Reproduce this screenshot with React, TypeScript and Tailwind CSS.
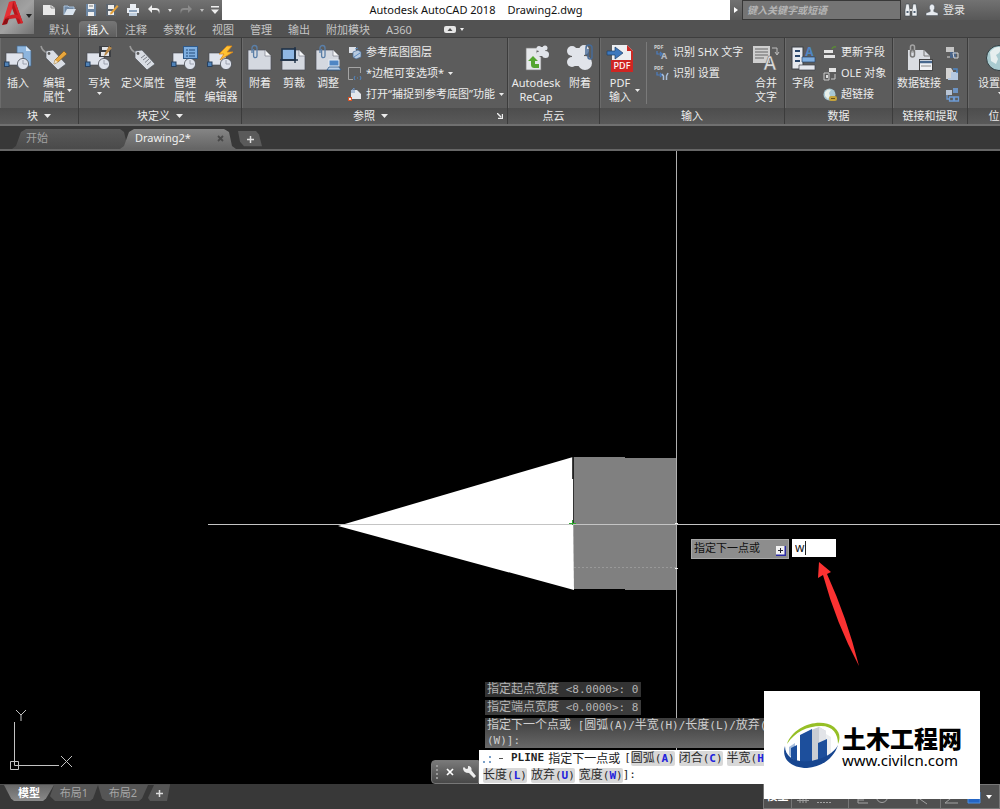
import type { ReactNode } from 'react';

type IconProps = { children: ReactNode };

function BigIcon({ children }: IconProps) {
  return (
    <svg className="h-7 w-7 shrink-0" viewBox="0 0 28 28" fill="none" aria-hidden="true">
      {children}
    </svg>
  );
}

function SmallIcon({ children }: IconProps) {
  return (
    <svg className="h-3.5 w-3.5 shrink-0 overflow-visible" viewBox="0 0 14 14" fill="none" aria-hidden="true">
      {children}
    </svg>
  );
}

function Caret({ className = 'h-[3px] w-[5px]' }: { className?: string }) {
  return (
    <svg className={`${className} shrink-0`} viewBox="0 0 6 4" preserveAspectRatio="none" aria-hidden="true">
      <path d="M0 0h6L3 4z" fill="currentColor" />
    </svg>
  );
}

// rectangle + circle + grip square, shared by all block icons
function BlockShapes() {
  return (
    <>
      <rect x="2" y="9" width="17" height="12" fill="#dfe3ec" stroke="#43474f" strokeWidth=".6" />
      <rect x="0.5" y="18" width="4.500" height="4.500" fill="#4f82b8" stroke="#27405e" />
      <circle cx="19" cy="20" r="5.6" fill="#dde2ec" stroke="#4a4e56" strokeWidth=".8" />
      <path d="M19 16v4h4" stroke="#8f96a3" strokeWidth=".8" />
    </>
  );
}

function TagShape() {
  return (
    <>
      <path d="M1 2c1 4 3 6 7 7" stroke="#9b9b9b" strokeWidth="1.6" />
      <path d="M6 7l7-1 13 14-8 6L6 14z" fill="#d9dde4" stroke="#50545b" strokeWidth=".7" />
      <circle cx="9" cy="9.500" r="1.4" fill="#5b5b5b" />
    </>
  );
}

function PageShape() {
  return (
    <>
      <path d="M2 6h17l6 6v14H2z" fill="#d4d8e0" stroke="#4b4f56" strokeWidth=".7" />
      <path d="M19 6v6h6" fill="#f6f7f9" stroke="#7b808a" strokeWidth=".7" />
    </>
  );
}

function ClipShape() {
  return <path d="M6 9V4a2.500 2.500 0 0 1 5 0v8a1.700 1.700 0 0 1-3.400 0V5" stroke="#5a7fa8" strokeWidth="1.300" />;
}

// four-lobed scan cloud
function Cloud() {
  return (
    <g fill="#e1e4ea">
      <circle cx="6" cy="7" r="5" />
      <circle cx="18" cy="6" r="5" />
      <circle cx="6" cy="18" r="5" />
      <circle cx="19" cy="19" r="7" />
      <path d="M6 4h12v18H6z" />
    </g>
  );
}

const icons = {
  insert: (
    <BigIcon>
      <path d="M13 2h9l5 5v15H13z" fill="#8db5de" stroke="#45678d" strokeWidth=".7" />
      <path d="M22 2v5h5z" fill="#d8e8f7" />
      <BlockShapes />
    </BigIcon>
  ),
  editAttr: (
    <BigIcon>
      <TagShape />
      <path d="M24 7l3 3-9 8-4 2 1-4z" fill="#e8a63c" stroke="#7c5417" strokeWidth=".6" />
      <path d="M14 20l1-4 3 2z" fill="#f0e2c4" />
    </BigIcon>
  ),
  writeBlock: (
    <BigIcon>
      <BlockShapes />
      <path d="M14 2h12v11H14z" fill="#3d3f43" />
      <path d="M17 3h6v3h-6zM16 8h8v4h-8z" fill="#e2e4e8" />
      <path d="M24 2l3 2-6 7-2 1 1-3z" fill="#b98a4c" />
    </BigIcon>
  ),
  defineAttr: (
    <BigIcon>
      <TagShape />
      <path d="M12 14l4-3M14 16l4-3M16 18.500l4-3.500M18 21l4-3.500" stroke="#7a7f87" />
    </BigIcon>
  ),
  manageAttr: (
    <BigIcon>
      <BlockShapes />
      <rect x="12.500" y="2.500" width="14" height="12" fill="#7eaee0" stroke="#2f5a8a" />
      <path d="M15 6h2m1 0h6M15 9h2m1 0h6M15 12h2m1 0h6" stroke="#234a78" strokeWidth="1.200" />
    </BigIcon>
  ),
  blockEditor: (
    <BigIcon>
      <BlockShapes />
      <path d="M20 2l-8 8h5l-4 6 13-8h-6l5-6z" fill="#ffc233" stroke="#d98516" strokeWidth=".8" />
    </BigIcon>
  ),
  attach: (
    <BigIcon>
      <PageShape />
      <ClipShape />
    </BigIcon>
  ),
  clip: (
    <BigIcon>
      <PageShape />
      <rect x="2" y="5" width="13" height="11" fill="#8fb7e4" stroke="#1f3147" strokeWidth="1.600" />
      <path d="M0 16h18M15 3v16" stroke="#1f3147" strokeWidth="1.400" />
    </BigIcon>
  ),
  adjust: (
    <BigIcon>
      <PageShape />
      <ClipShape />
      <rect x="15" y="16" width="10" height="6" fill="#4f86c4" stroke="#e8eef6" />
      <path d="M13 26h14l-2-3H15z" fill="#b9cfe8" stroke="#2f5a8a" strokeWidth=".8" />
    </BigIcon>
  ),
  recap: (
    <BigIcon>
      <path d="M4 4h15v22H4z" fill="#e5e7ea" stroke="#777" strokeWidth=".7" />
      <path d="M17 24h-4c-3 0-4-1-4-4v-3H6l5-5 5 5h-3v3h4z" fill="#55a630" />
      <g transform="translate(14 1) scale(.5)">
        <circle cx="13" cy="13" r="12" fill="#5c5c5c" />
        <Cloud />
      </g>
    </BigIcon>
  ),
  cloudAttach: (
    <BigIcon>
      <Cloud />
      <path d="M20 11V4a2.500 2.500 0 0 1 6 0v9a2 2 0 0 1-4 0V5" stroke="#466a96" strokeWidth="1.500" />
    </BigIcon>
  ),
  pdf: (
    <BigIcon>
      <path d="M6 1h15l6 6v20H6z" fill="#eceef1" />
      <path d="M21 1v6h6z" fill="#c92a25" />
      <path d="M26 7v19" stroke="#c92a25" strokeWidth="2" />
      <rect x="5" y="16" width="22" height="12" fill="#cf2522" />
      <text x="16" y="25" textAnchor="middle" fontFamily="Noto Sans" fontSize="9" fontWeight="500" fill="#fff">PDF</text>
      <path d="M1 7h8V3l8 6-8 6v-4H1z" fill="#3d78bd" stroke="#1e3f68" strokeWidth=".7" />
    </BigIcon>
  ),
  combineText: (
    <BigIcon>
      <rect x="1" y="2" width="17" height="17" fill="#cfcfcf" />
      <path d="M3 5h13M3 8h13M3 11h13M3 14h9" stroke="#666" strokeWidth="1.200" />
      <text x="18" y="26" textAnchor="middle" fontFamily="Noto Sans" fontSize="19" fontWeight="600" fill="#dcdcdc" stroke="#5a5a5a" strokeWidth=".5">A</text>
      <path d="M20 4h5v6m-2-2l2 3 2-3" stroke="#bdbdbd" />
    </BigIcon>
  ),
  field: (
    <BigIcon>
      <rect x="3" y="3" width="11" height="22" fill="#e6e9ef" stroke="#3c4047" />
      <path d="M6 7h5M6 12h5M6 17h5" stroke="#28456b" strokeWidth="2" />
      <text x="20.500" y="12" textAnchor="middle" fontFamily="Noto Sans" fontSize="12" fontWeight="700" fill="#4f86c4">A</text>
      <path d="M13 13h13v5H13z" fill="#7faee0" stroke="#28456b" strokeWidth=".7" />
      <path d="M10 21h16v5H10z" fill="#e6e9ef" stroke="#3c4047" strokeWidth=".7" />
    </BigIcon>
  ),
  dataLink: (
    <BigIcon>
      <path d="M3 6h16l6 6v14H3z" fill="#dadde2" />
      <path d="M19 6v6h6" stroke="#777" />
      <rect x="14.500" y="15.500" width="13" height="11" fill="#f0f1f4" stroke="#444" />
      <path d="M15 18h12" stroke="#49688e" strokeWidth="2.500" />
      <path d="M16 22h10" stroke="#888" />
      <rect x="5.500" y="1" width="4" height="7" rx="2" stroke="#a4a4a4" strokeWidth="1.500" />
      <rect x="5.500" y="6" width="4" height="7" rx="2" stroke="#777" strokeWidth="1.500" />
    </BigIcon>
  ),
  location: (
    <BigIcon>
      <circle cx="13" cy="14" r="12.500" fill="#a9cbd0" stroke="#2f3b3f" />
      <path d="M4 8c4-5 8-6 12-4l-3 5-3 2 2 4-2 5-5-3z" fill="#e6efef" />
      <path d="M16 13l6-2 3 5-5 7-4-3z" fill="#e6efef" />
    </BigIcon>
  ),
  underlay: (
    <SmallIcon>
      <path d="M1 1h7v6H1z" fill="#dde1e8" />
      <path d="M5 6l5-2 3 2v5l-5 2-3-2z" fill="#b6c9e0" stroke="#466a96" strokeWidth=".7" />
      <path d="M7 3l3-1M6 11l6-4" stroke="#5a8ac0" />
    </SmallIcon>
  ),
  frame: (
    <SmallIcon>
      <path d="M12.500 6V.5H.5v12H5" stroke="#a4a4a4" />
      <path d="M7 9l-1 2 1 2m5-4l1 2-1 2m-3-2h1" stroke="#4f86c4" />
    </SmallIcon>
  ),
  snap: (
    <SmallIcon>
      <path d="M3 2h6l4 4v5H3z" fill="#e3e6eb" />
      <path d="M4 5V2l2-2v5" stroke="#6b8fbd" />
      <rect x=".5" y="9.500" width="3" height="3" fill="#e9e9e9" stroke="#dc5526" />
    </SmallIcon>
  ),
  shx: (
    <SmallIcon>
      <text x="-1" y="3" fontFamily="Noto Sans" fontSize="5" fontWeight="700" fill="#d4d4d4">PDF</text>
      <path d="M2 5v3h4m-1-2l2 2-2 2" stroke="#4a7cc0" strokeWidth="1.200" />
      <text x="6" y="13" fontFamily="Noto Sans" fontSize="9" fontWeight="700" fill="#b5bbc6">A</text>
    </SmallIcon>
  ),
  shxSettings: (
    <SmallIcon>
      <text x="-1" y="3" fontFamily="Noto Sans" fontSize="5" fontWeight="700" fill="#d4d4d4">PDF</text>
      <path d="M2 5v3h4m-1-2l2 2-2 2" stroke="#4a7cc0" strokeWidth="1.200" />
      <path d="M8.500 13V9L7 7m4.500 6V9L13 6" stroke="#a9c0dd" strokeWidth="1.500" />
    </SmallIcon>
  ),
  updateField: (
    <SmallIcon>
      <path d="M1 4h9v3H1zM1 9h11v3H1z" fill="#e4e4e4" />
      <path d="M9 3a3 3 0 0 1 4-2" stroke="#5a8a36" strokeWidth="1.500" />
    </SmallIcon>
  ),
  ole: (
    <SmallIcon>
      <path d="M6 1h7v4H6z" fill="#e4e4e4" />
      <path d="M1 6h5v7H1zM12 7v5H8" stroke="#c9c9c9" />
      <path d="M3 8h2v3H3z" fill="#ddd" />
    </SmallIcon>
  ),
  hyperlink: (
    <SmallIcon>
      <circle cx="6.500" cy="6.500" r="6" fill="#a9c8d4" />
      <path d="M2 4c2-3 5-3 6-2L6 5l1 3-2 3-3-3z" fill="#e7efe9" />
      <rect x="6" y="8" width="8" height="5" rx="2" fill="#c4a23c" />
      <path d="M8 10.500h4" stroke="#6a5413" />
    </SmallIcon>
  ),
  extract1: (
    <SmallIcon>
      <path d="M1 1h8v5H1z" fill="#c5c5c5" />
      <path d="M5 6h6v6H5z" fill="#4a6488" />
      <path d="M2 11h3m3-4h5v5H9z" stroke="#d6d6d6" />
    </SmallIcon>
  ),
  extract2: (
    <SmallIcon>
      <path d="M1 1h5l2 3v8H1z" fill="#d3d3d3" />
      <path d="M6 5h7v8H3v-2h3z" fill="#b4c8e0" />
      <path d="M8 2h4v4" stroke="#4f86c4" strokeWidth="1.500" />
    </SmallIcon>
  ),
  extract3: (
    <SmallIcon>
      <path d="M1 2h6v5H1z" fill="#b8c4d4" />
      <path d="M8 0h5v5H8z" fill="#6d93c2" />
      <path d="M4.500 9h4v4h-4zM9.500 9h4v4h-4zM2 7v4h2" stroke="#6d9bd4" strokeWidth="1.300" />
    </SmallIcon>
  ),
};

type ToolProps = {
  icon: ReactNode;
  lines: string[];
  width?: string;
  caret?: 'below' | 'side';
};

function Tool({ icon, lines, width = 'w-9', caret }: ToolProps) {
  return (
    <button type="button" className={`${width} relative flex shrink-0 flex-col items-center pt-1.5`}>
      {icon}
      <span className="mt-1 text-center whitespace-nowrap leading-[14px]">
        {lines.map((line) => (
          <span key={line} className="block">{line}</span>
        ))}
      </span>
      {caret === 'below' && <Caret className="mt-0.5 h-[3px] w-[5px]" />}
      {caret === 'side' && (
        <span className="absolute right-0 bottom-4">
          <Caret />
        </span>
      )}
    </button>
  );
}

type RowProps = { icon: ReactNode; label: string; caret?: boolean };

function ToolRow({ icon, label, caret }: RowProps) {
  return (
    <button type="button" className="flex h-[21px] items-center gap-1 whitespace-nowrap">
      {icon}
      <span>{label}</span>
      {caret && <Caret className="h-[3px] w-[5px]" />}
    </button>
  );
}

type PanelProps = {
  title: string;
  width: string;
  menu?: boolean;
  launcher?: boolean;
  children: ReactNode;
};

function Panel({ title, width, menu, launcher, children }: PanelProps) {
  return (
    <section className={`${width} flex shrink-0 flex-col border-r border-[#3c3c3c] shadow-[inset_1px_0_0_#6b6b6b]`}>
      <div className="flex h-[70px]">{children}</div>
      <div className={`${launcher ? 'pr-2' : ''} relative flex h-4 items-center justify-center gap-1.5 bg-linear-to-b from-[#4d4d4d] to-[#595959]`}>
        <span>{title}</span>
        {menu && <Caret className="h-1 w-[7px]" />}
        {launcher && (
          <svg className="absolute right-1 h-1.5 w-1.5" viewBox="0 0 6 6" aria-hidden="true">
            <path d="M0 0l4 4M5.500 1v4.500H1" stroke="#eee" strokeWidth="1.400" fill="none" />
          </svg>
        )}
      </div>
    </section>
  );
}

const quickAccess = [
  { label: '新建', icon: <SmallIcon><path d="M1 2h8l4 3v7H1z" fill="#e9e9e9" /><path d="M9 2v3h4" stroke="#888" /></SmallIcon> },
  { label: '打开', icon: <SmallIcon><path d="M1 12V3h4l1 1h5v2" stroke="#a7c1dc" fill="#728aa5" /><path d="M1 12l3-6h9l-3 6z" fill="#dbe5ef" /></SmallIcon> },
  { label: '保存', icon: <SmallIcon><path d="M2 1h10v12H2z" fill="#6d87a4" /><path d="M4 1h6v5H4zM4 9h6v4H4z" fill="#f0f0f0" /><path d="M5 3h4" stroke="#777" /></SmallIcon> },
  { label: '另存为', icon: <SmallIcon><path d="M1 1h10v12H1z" fill="#5d6670" /><path d="M3 2h6v4H3zM3 8h6v4H3z" fill="#eee" /><path d="M12 2l1.500 1.500L7 11l-2 .5.500-2z" fill="#e3a13b" /></SmallIcon> },
  { label: '打印', icon: <SmallIcon><path d="M4 1h6v4H4zM1 5h12v5H1z" fill="#e9edf2" /><path d="M3 8h8" stroke="#6c89a9" strokeWidth="1.500" /><path d="M3 10h8v3H3z" fill="#bfcede" /></SmallIcon> },
  { label: '放弃', icon: <SmallIcon><path d="M5 2L1 6l4 4V7h4q3 0 3 4 2-6-3-6H5z" fill="#eee" /></SmallIcon> },
];

const tabs = ['默认', '插入', '注释', '参数化', '视图', '管理', '输出', '附加模块', 'A360'];

function TitleBar() {
  return (
    <header className="flex h-5 items-stretch bg-linear-to-b from-[#727272] to-[#585858] text-[#e4e4e4]">
      <div className="flex w-[222px] shrink-0 items-center gap-[7px] pl-[42px]">
        {quickAccess.map((item) => (
          <button key={item.label} type="button" aria-label={item.label}>
            {item.icon}
          </button>
        ))}
        <Caret className="h-[3px] w-1" />
        <button type="button" aria-label="重做" className="opacity-30">
          <SmallIcon><path d="M9 2l4 4-4 4V7H5Q2 7 2 11q-2-6 3-6h4z" fill="#ddd" /></SmallIcon>
        </button>
        <Caret className="h-[3px] w-1 opacity-70" />
        <svg className="h-2 w-2" viewBox="0 0 8 8" aria-hidden="true">
          <path d="M0 0h8v1.500H0zM0 3.500h8L4 8z" fill="#eee" />
        </svg>
      </div>
      <h1 className="flex flex-1 items-center justify-center gap-3 bg-white whitespace-nowrap text-[#111]">
        <span>Autodesk AutoCAD 2018</span>
        <span>Drawing2.dwg</span>
      </h1>
      <div className="flex w-[270px] shrink-0 items-center">
        <button type="button" aria-label="展开搜索" className="flex h-5 w-3 items-center justify-center">
          <svg className="h-1.5 w-1" viewBox="0 0 4 6" aria-hidden="true"><path d="M0 0l4 3-4 3z" fill="#fff" /></svg>
        </button>
        <input
          aria-label="搜索"
          placeholder="键入关键字或短语"
          className="h-5 w-[159px] border border-[#383838] bg-[#747474] px-1 text-[10px] font-bold italic placeholder:text-[#b4b4b4]"
        />
        <button type="button" aria-label="查找" className="ml-[3px]">
          <svg className="h-3.5 w-3.5" viewBox="0 0 14 14" aria-hidden="true">
            <path d="M2 1h3l1 6v6H1V7zM9 1h3l1 6v6H8V7z" fill="#eceff2" stroke="#3e464e" strokeWidth=".6" />
            <path d="M2.500 9h2M9.500 9h2" stroke="#4f6173" strokeWidth="2" />
            <path d="M6 6h2v2H6z" fill="#ddd" />
          </svg>
        </button>
        <button type="button" className="ml-[7px] flex items-center gap-1">
          <svg className="h-3.5 w-3.5" viewBox="0 0 14 14" aria-hidden="true">
            <path d="M7 1a3 3.500 0 0 1 1.800 6v1.500L13 10v2.500H1V10l4.200-1.500V7A3 3.500 0 0 1 7 1z" fill="#e7ebf0" stroke="#49515a" strokeWidth=".5" />
          </svg>
          <span>登录</span>
        </button>
      </div>
    </header>
  );
}

function RibbonTabs() {
  return (
    <nav className="flex h-[18px] items-end border-b border-[#3e3e3e] bg-[#525252] pl-[41px] text-[#c4c4c4]">
      {tabs.map((tab) => (
        <button
          key={tab}
          type="button"
          className={tab === '插入' ? 'h-4 rounded-t-sm border-x border-t border-[#757575] bg-linear-to-b from-[#757575] to-[#5e5e5e] px-[7px] leading-[14px] text-white' : 'h-4 px-2 leading-[15px]'}
        >
          {tab}
        </button>
      ))}
      <button type="button" aria-label="功能区显示" className="ml-6 flex h-4 items-center gap-1 text-[#eee]">
        <svg className="h-[7px] w-3" viewBox="0 0 12 7" aria-hidden="true">
          <rect width="12" height="7" rx="2" fill="#e6e6e6" />
          <path d="M3.500 5h5L6 2z" fill="#4d4d4d" />
        </svg>
        <Caret className="h-[3px] w-1" />
      </button>
    </nav>
  );
}

function Ribbon() {
  return (
    <div className="flex overflow-hidden border-b-2 border-b-[#707070] bg-[#5c5c5c] text-[#ececec]">
      <Panel title="块" width="w-[79px]" menu>
        <Tool icon={icons.insert} lines={['插入']} />
        <Tool icon={icons.editAttr} lines={['编辑', '属性']} caret="side" />
      </Panel>
      <Panel title="块定义" width="w-[163px]" menu>
        <Tool icon={icons.writeBlock} lines={['写块']} width="w-10" caret="below" />
        <Tool icon={icons.defineAttr} lines={['定义属性']} width="w-12" />
        <Tool icon={icons.manageAttr} lines={['管理', '属性']} />
        <Tool icon={icons.blockEditor} lines={['块', '编辑器']} />
      </Panel>
      <Panel title="参照" width="w-[266px]" menu launcher>
        <Tool icon={icons.attach} lines={['附着']} />
        <Tool icon={icons.clip} lines={['剪裁']} width="w-8" />
        <Tool icon={icons.adjust} lines={['调整']} />
        <div className="pt-1 pl-0.5">
          <ToolRow icon={icons.underlay} label="参考底图图层" />
          <ToolRow icon={icons.frame} label="*边框可变选项*" caret />
          <ToolRow icon={icons.snap} label="打开“捕捉到参考底图”功能" caret />
        </div>
      </Panel>
      <Panel title="点云" width="w-[92px]">
        <Tool icon={icons.recap} lines={['Autodesk', 'ReCap']} width="w-14" />
        <Tool icon={icons.cloudAttach} lines={['附着']} width="w-8" />
      </Panel>
      <Panel title="输入" width="w-[185px]">
        <Tool icon={icons.pdf} lines={['PDF', '输入']} width="w-10" caret="side" />
        <div className="mx-1.5 my-1 border-l border-[#7a7a7a]" />
        <div className="flex-1 pt-1 pl-0.5">
          <ToolRow icon={icons.shx} label="识别 SHX 文字" />
          <ToolRow icon={icons.shxSettings} label="识别 设置" />
        </div>
        <Tool icon={icons.combineText} lines={['合并', '文字']} />
      </Panel>
      <Panel title="数据" width="w-[108px]">
        <Tool icon={icons.field} lines={['字段']} />
        <div className="pt-1 pl-0.5">
          <ToolRow icon={icons.updateField} label="更新字段" />
          <ToolRow icon={icons.ole} label="OLE 对象" />
          <ToolRow icon={icons.hyperlink} label="超链接" />
        </div>
      </Panel>
      <Panel title="链接和提取" width="w-[75px]">
        <Tool icon={icons.dataLink} lines={['数据链接']} width="w-13" />
        <div className="pt-1">
          <button type="button" aria-label="从源下载" className="flex h-[21px] items-center">{icons.extract1}</button>
          <button type="button" aria-label="上载到源" className="flex h-[21px] items-center">{icons.extract2}</button>
          <button type="button" aria-label="提取数据" className="flex h-[21px] items-center">{icons.extract3}</button>
        </div>
      </Panel>
      <Panel title="位置" width="w-16">
        <Tool icon={icons.location} lines={['设置位置']} width="w-16" caret="below" />
      </Panel>
    </div>
  );
}

function DocumentTabs() {
  return (
    <nav className="flex h-[25px] items-end border-b-2 border-[#666] bg-[#383838] pl-3 text-[#a2a2a2]">
      <button
        type="button"
        className="h-5 w-[116px] bg-linear-to-b from-[#595959] to-[#4a4a4a] pb-0.5 pl-3.5 text-left [clip-path:polygon(0_100%,4px_85%,9px_15%,14px_0,108px_0,112px_15%,116px_100%)]"
      >
        开始
      </button>
      <div className="-ml-2 flex h-5 w-[116px] items-center justify-between bg-linear-to-b from-[#858585] to-[#656565] pr-3 pb-0.5 pl-[15px] text-[#f0f0f0] [clip-path:polygon(0_100%,4px_85%,9px_15%,14px_0,104px_0,109px_15%,112px_85%,116px_100%)]">
        <button type="button">Drawing2*</button>
        <button type="button" aria-label="关闭">
          <svg className="h-[7px] w-[7px]" viewBox="0 0 7 7" aria-hidden="true"><path d="M1 1l5 5M6 1L1 6" stroke="#494949" strokeWidth="1.800" /></svg>
        </button>
      </div>
      <button
        type="button"
        aria-label="新图形"
        className="ml-0.5 flex h-[18px] w-6 items-center justify-center bg-[#5a5a5a] pb-0.5 [clip-path:polygon(0_0,18px_0,21px_20%,24px_85%,6px_85%,2px_60%)]"
      >
        <svg className="h-[7px] w-[7px]" viewBox="0 0 7 7" aria-hidden="true"><path d="M3.500 0v7M0 3.500h7" stroke="#ddd" strokeWidth="1.500" /></svg>
      </button>
    </nav>
  );
}

function Drawing() {
  return (
    <svg className="absolute inset-0 h-full w-full" aria-hidden="true">
      <path d="M573 306h52v1h52v132h-52v-1h-51z" fill="#808080" />
      <path d="M338 375l235-69 1 133z" fill="#fff" />
      <path d="M573 306v22" stroke="#000" strokeWidth="1.500" />
      <path d="M573.500 328v45" stroke="#333" />
      <path d="M574 416.500h103" stroke="#999" strokeDasharray="2 2" />
      <line x1="208" y1="373.500" x2="100%" y2="373.500" stroke="#c4c4c4" />
      <line x1="676.500" y1="0" x2="676.500" y2="100%" stroke="#b0b0b0" />
      <path d="M569 372.500h7M572.500 369v5" stroke="#2faa2f" />
      <path d="M675 372.500h3M675 417.500h3" stroke="#eee" />
      <path d="M819 411l12 10-4 2q20 44 32 92-23-43-36-91l-5 3z" fill="#fb3232" />
    </svg>
  );
}

function UcsIcon() {
  return (
    <svg className="absolute bottom-2.5 left-2 h-[66px] w-[68px]" viewBox="0 0 68 66" fill="none" stroke="#c2c2c2" aria-hidden="true">
      <path d="M2.500 53.500h8v8h-8zM6.500 14v43.500H51" />
      <path d="M8 2l5 5 5-5M13 7v6M53 48l11 11M64 48L53 59" />
    </svg>
  );
}

function Mono({ children }: IconProps) {
  return <span className="text-[11px]">{children}</span>;
}

function Option({ name, hotkey }: { name: string; hotkey: string }) {
  return (
    <button type="button" className="rounded-xs bg-[#d8d8d8] leading-[15px] text-[#2c2c2c]">
      {name}
      <Mono>
        (<b className="text-[#2222dc]">{hotkey}</b>)
      </Mono>
    </button>
  );
}

function CommandLine() {
  return (
    <div className="absolute bottom-0 left-[431px] flex items-end font-['DejaVu_Sans_Mono','Noto_Sans_CJK_SC',monospace] text-[12px] whitespace-nowrap">
      <div className="flex h-6 w-12 items-center gap-2 rounded-l-sm border border-[#777] bg-linear-to-b from-[#797979] to-[#484848] pl-1">
        <span className="h-3.5 border-l-2 border-dotted border-[#999]" />
        <button type="button" aria-label="关闭">
          <svg className="h-2 w-2" viewBox="0 0 8 8" aria-hidden="true"><path d="M1 1l6 6M7 1L1 7" stroke="#fff" strokeWidth="1.700" /></svg>
        </button>
        <button type="button" aria-label="自定义">
          <svg className="h-3.5 w-3.5" viewBox="0 0 14 14" aria-hidden="true">
            <path d="M2 2l2 2 2-.500L6 1q4 0 3.500 4.500L14 11l-2 2-5-5Q1 8 1 3z" fill="#eee" />
          </svg>
        </button>
      </div>
      <div>
        <div className="flex flex-col items-start gap-[3px] pb-0.5 pl-1.5 text-[#b5b5b5]">
          <p className="bg-[#333] px-0.5 leading-[15px]">
            指定起点宽度<Mono> &lt;8.0000&gt;: 0</Mono>
          </p>
          <p className="bg-[#3c3c3c] px-0.5 leading-[15px]">
            指定端点宽度<Mono> &lt;0.0000&gt;: 8</Mono>
          </p>
          <p className="bg-linear-to-b from-[#3d3d3d] to-[#686868] px-0.5 leading-[14px] text-[#cfcfcf]">
            指定下一个点或<Mono> [</Mono>圆弧<Mono>(A)/</Mono>半宽<Mono>(H)/</Mono>长度<Mono>(L)/</Mono>放弃<Mono>(U)/</Mono>宽度
            <br />
            <Mono>(W)]:</Mono>
          </p>
        </div>
        <div className="bg-white px-1 text-[#222]">
          <div className="flex h-[17px] items-center gap-1">
            <svg className="mr-0.5 h-2.5 w-2.5" viewBox="0 0 10 10" aria-hidden="true">
              <path d="M0 7h2v2H0zM6 7h2v2H6zM6 2h2v2H6z" fill="#7ba0c8" />
            </svg>
            <span className="w-1 border-t border-[#555]" />
            <b className="ml-1 text-[11px]">PLINE</b>
            <span>指定下一点或</span>
            <span className="flex items-center"><Mono>[</Mono><Option name="圆弧" hotkey="A" /></span>
            <Option name="闭合" hotkey="C" />
            <Option name="半宽" hotkey="H" />
          </div>
          <div className="flex h-[17px] items-center gap-1">
            <Option name="长度" hotkey="L" />
            <Option name="放弃" hotkey="U" />
            <span className="flex items-center"><Option name="宽度" hotkey="W" /><Mono>]:</Mono></span>
          </div>
        </div>
      </div>
    </div>
  );
}

function DynamicPrompt() {
  return (
    <div className="absolute top-[388px] left-[691px] flex items-start gap-[3px]">
      <label htmlFor="dyn" className="flex h-5 w-[98px] items-center justify-between border border-[#a8a8a8] bg-[#8d8d8d] px-0.5 pb-px text-[#111]">
        指定下一点或
        <svg className="mt-1 h-2.5 w-2.5" viewBox="0 0 10 10" aria-hidden="true">
          <rect width="10" height="10" fill="#2b2ba6" />
          <rect width="8.500" height="8.500" fill="#f2f2f2" />
          <path d="M4.500 2v5M2 4.500h5" stroke="#223" />
        </svg>
      </label>
      <div className="flex h-[18px] w-11 items-center bg-white pl-[3px]">
        <input id="dyn" defaultValue="w" className="w-2.5 font-['Noto_Sans',sans-serif] text-[12px] leading-4 text-[#111]" />
        <span className="h-3.5 border-l border-[#222]" />
      </div>
    </div>
  );
}

function Watermark() {
  return (
    <div className="absolute right-5 bottom-2.5 flex h-[108px] w-[216px] items-center gap-0.5 bg-white pl-5">
      <svg className="h-[46px] w-14 shrink-0" viewBox="0 0 56 46" aria-hidden="true">
        <path d="M27 8l8-3 7 4v29H27z" fill="#c9cdd3" />
        <path d="M35 5l7 4v29h-7z" fill="#e2e4e8" />
        <path d="M42 12l5 3v20h-5z" fill="#eceef0" />
        <path d="M5 25l6-4v17l-6-5z" fill="#a9bfdd" />
        <path d="M7 26l6-3v17l-6-4z" fill="#1d4f9c" />
        <path d="M16 13l12-6v34l-12-1z" fill="#1d4f9c" />
        <path d="M34 21l9-4v20l-9 3z" fill="#1d4f9c" />
        <path d="M3 22C9 4 36-5 50 5c7 6 6 12 4 17C54 12 49 4 37 4 23 4 11 10 3 22z" fill="#96bf26" />
        <path d="M1 24c0 11 10 17 25 15 14-2 24-8 28-16-4 13-16 22-31 23C7 46-3 37 1 24z" fill="#174690" />
      </svg>
      <div className="pt-1.5 whitespace-nowrap text-black">
        <p className="text-[24px] leading-6 font-black">土木工程网</p>
        <p className="text-[15px] leading-[18px]">www.civilcn.com</p>
      </div>
    </div>
  );
}

function StatusBar() {
  return (
    <footer className="flex h-[25px] shrink-0 items-start justify-between bg-[#383838] text-[#a6a6a6]">
      <div className="flex border-t border-[#505050] pl-1">
        <button type="button" className="h-4 w-[50px] bg-linear-to-b from-[#686868] to-[#8a8a8a] font-bold leading-4 text-white [clip-path:polygon(0_0,100%_0,42px_85%,39px_100%,10px_100%,7px_85%)]">模型</button>
        <button type="button" className="-ml-1 h-4 w-12 bg-[#555] leading-4 [clip-path:polygon(4px_0,100%_0,43px_85%,40px_100%,5px_100%,0_70%)]">布局1</button>
        <button type="button" className="h-4 w-[50px] bg-[#555] leading-4 [clip-path:polygon(0_0,100%_0,44px_85%,41px_100%,8px_100%,4px_85%)]">布局2</button>
        <button type="button" aria-label="新建布局" className="flex h-4 w-[22px] items-center justify-center bg-[#555] [clip-path:polygon(6px_0,100%_0,19px_100%,2px_100%,0_80%)]">
          <svg className="h-[7px] w-[7px]" viewBox="0 0 7 7" aria-hidden="true"><path d="M3.500 0v7M0 3.500h7" stroke="#ddd" strokeWidth="1.500" /></svg>
        </button>
      </div>
      <div className="flex h-[25px] w-[237px] items-center border border-[#777] bg-[#505050]">
        <button type="button" className="h-full w-7 border-r border-[#777] font-bold text-white">模型</button>
        <svg className="h-full w-[190px]" viewBox="0 0 190 23" fill="none" stroke="#a2a2a2" aria-hidden="true">
          <path d="M5 15.500h12M8 8v10M11 8v10M14 8v10" />
          <path d="M25 17.500h14" strokeDasharray="2 1" />
          <path d="M56.500 0v23M148.500 0v23" stroke="#777" />
          <path d="M66 7v11h10M66 15h6" />
          <circle cx="90" cy="12" r="5.500" />
          <path d="M125 7v12M125 12l10 7M153 18h13M153 18l10-8" />
          <path d="M176 7h12v11h-12z" fill="#2465c4" stroke="#4a8ede" />
        </svg>
        <Caret className="ml-1 h-1 w-1.5 text-white" />
      </div>
    </footer>
  );
}

export default function App() {
  return (
    <div className="relative flex h-screen flex-col overflow-hidden bg-black font-['Noto_Sans','Noto_Sans_CJK_SC',sans-serif] text-[11px]">
      <TitleBar />
      <RibbonTabs />
      <button type="button" aria-label="应用程序菜单" className="absolute top-0 left-0 flex h-[34px] w-[34px] items-start bg-linear-to-br from-[#8a8a8a] via-[#a2a2a2] to-[#717171] text-[#222]">
        <svg className="h-7 w-6 shrink-0" viewBox="0 0 24 28" aria-hidden="true">
          <path d="M9 2l6-1 8 22-5 1-6-16z" fill="#b5161c" />
          <path d="M9 2l4-.5L12 9 7 24l-5 1z" fill="#e63035" />
          <path d="M13 1.500l2-.5 8 22-2 .500z" fill="#d8262b" />
          <path d="M5 18q6-5 14-3l1 4q-8-2-15 2z" fill="#cf2026" />
          <path d="M7 24l2-6-4 1-3 6z" fill="#8e1015" />
        </svg>
        <Caret className="mt-3.5 ml-0.5 h-1 w-1.5" />
      </button>
      <Ribbon />
      <DocumentTabs />
      <main className="relative flex-1 overflow-hidden bg-black">
        <Drawing />
        <UcsIcon />
        <DynamicPrompt />
        <CommandLine />
      </main>
      <StatusBar />
      <Watermark />
    </div>
  );
}
